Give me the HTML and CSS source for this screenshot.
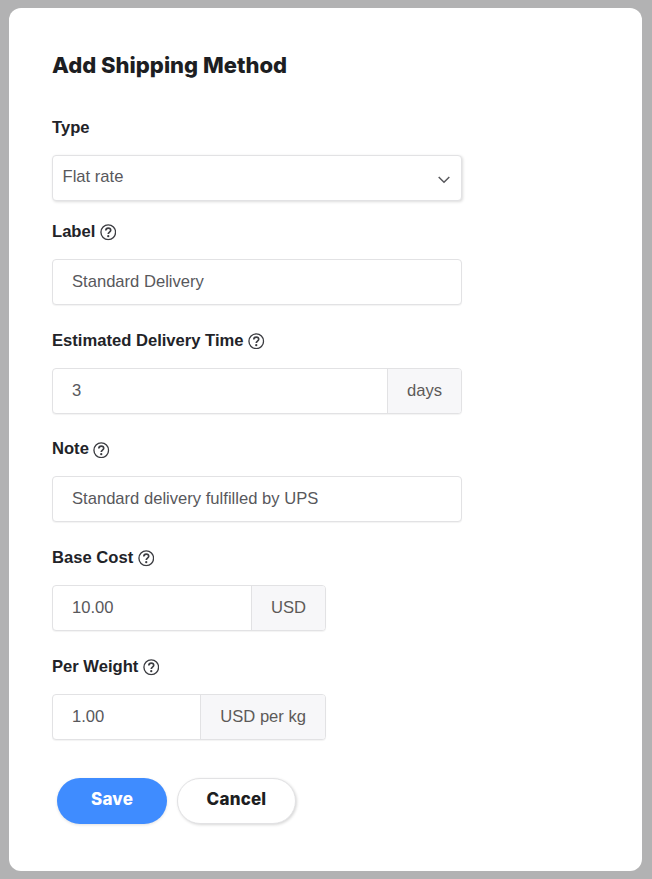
FILE: index.html
```html
<!DOCTYPE html>
<html lang="en">
<head>
<meta charset="utf-8">
<title>Add Shipping Method</title>
<link rel="stylesheet" href="styles.css">
</head>
<body>
<svg class="sprite" width="0" height="0" aria-hidden="true">
  <symbol id="help" viewBox="0 0 16 16">
    <circle cx="8" cy="8" r="7.1" fill="none" stroke="currentColor" stroke-width="1.3"/>
    <path d="M5.6 6.3C5.7 4.8 6.7 4 8 4c1.4 0 2.4.9 2.4 2 0 1.8-2.4 1.8-2.4 3.6" fill="none" stroke="currentColor" stroke-width="1.6"/>
    <circle cx="8" cy="11.8" r="1.1" fill="currentColor"/>
  </symbol>
</svg>
<main class="card">
  <h1 class="title">Add Shipping Method</h1>
  <section class="field field-select">
    <div class="label">Type</div>
    <div class="select">
      <span>Flat rate</span>
      <svg class="chevron" viewBox="0 0 12 8" width="12" height="8"><path d="M.7 1 6 6.3 11.3 1" fill="none" stroke="currentColor" stroke-width="1.5"/></svg>
    </div>
  </section>
  <section class="field">
    <div class="label">Label <svg class="help"><use href="#help"/></svg></div>
    <div class="input-group full"><div class="input">Standard Delivery</div></div>
  </section>
  <section class="field">
    <div class="label">Estimated Delivery Time <svg class="help"><use href="#help"/></svg></div>
    <div class="input-group full"><div class="input">3</div><div class="addon">days</div></div>
  </section>
  <section class="field">
    <div class="label">Note <svg class="help"><use href="#help"/></svg></div>
    <div class="input-group full"><div class="input">Standard delivery fulfilled by UPS</div></div>
  </section>
  <section class="field">
    <div class="label">Base Cost <svg class="help"><use href="#help"/></svg></div>
    <div class="input-group short"><div class="input">10.00</div><div class="addon">USD</div></div>
  </section>
  <section class="field">
    <div class="label">Per Weight <svg class="help"><use href="#help"/></svg></div>
    <div class="input-group short"><div class="input">1.00</div><div class="addon">USD per kg</div></div>
  </section>
  <div class="actions">
    <button class="btn btn-primary" type="button">Save</button>
    <button class="btn btn-secondary" type="button">Cancel</button>
  </div>
</main>
</body>
</html>
```
FILE: styles.css
```css
* { box-sizing: border-box; }
html, body { height: 100%; }
body {
  margin: 0;
  padding: 8px 10px 8px 9px;
  background: #b2b2b3;
  overflow: hidden;
  font-family: "Liberation Sans", Arial, sans-serif;
  color: #1d1e22;
}
.sprite { position: absolute; }
.card {
  height: 863px;
  background: #fff;
  border-radius: 12px;
  padding: 43px 43px 0;
}
.title {
  margin: 0 0 36px;
  font: 800 22px/28px Inter, sans-serif;
  color: #1d1e22;
}
.field { margin-bottom: 22.7px; }
.field-select { margin-bottom: 18px; }
.label {
  display: flex;
  align-items: center;
  gap: 4.5px;
  height: 24px;
  padding-top: 2px;
  margin-bottom: 16px;
  font-size: 16.6px;
  font-weight: 700;
  line-height: 22px;
  color: #222328;
}
.help { width: 16.5px; height: 16.5px; color: #3c3d42; flex: none; margin-top: 1px; }
.select, .input-group {
  height: 46px;
  width: 410px;
  border: 1px solid #e2e2e4;
  border-radius: 4px;
  display: flex;
  background: #fff;
  font-size: 16.6px;
  color: #58585c;
}
.select {
  align-items: center;
  justify-content: space-between;
  padding: 0 11.5px 2px 9.5px;
  box-shadow: 1px 1px 3px rgba(0, 0, 0, .14);
}
.chevron { color: #58585c; margin-top: 5px; }
.input-group { box-shadow: 0 1px 1px rgba(0, 0, 0, .05); overflow: hidden; }
.input-group.short { width: 274px; }
.input {
  flex: 1;
  padding: 0 19px;
  display: flex;
  align-items: center;
}
.addon {
  display: flex;
  align-items: center;
  padding: 0 19px;
  background: #f7f7f9;
  border-left: 1px solid #e2e2e4;
  color: #5d5a58;
}
.actions {
  display: flex;
  gap: 10px;
  margin-top: 38px;
  padding-left: 5px;
}
.btn {
  height: 46px;
  border-radius: 23px;
  font: 800 17px/1 Inter, sans-serif;
  letter-spacing: .2px;
  cursor: pointer;
  padding: 0 0 2px;
}
.btn-primary {
  width: 110px;
  border: 0;
  background: #3f8cff;
  color: #fff;
  box-shadow: 0 1px 3px rgba(0, 0, 0, .12);
}
.btn-secondary {
  width: 119px;
  border: 1px solid #e2e2e4;
  background: #fff;
  color: #1d1e22;
  box-shadow: 1px 1px 3px rgba(0, 0, 0, .16);
}
```
